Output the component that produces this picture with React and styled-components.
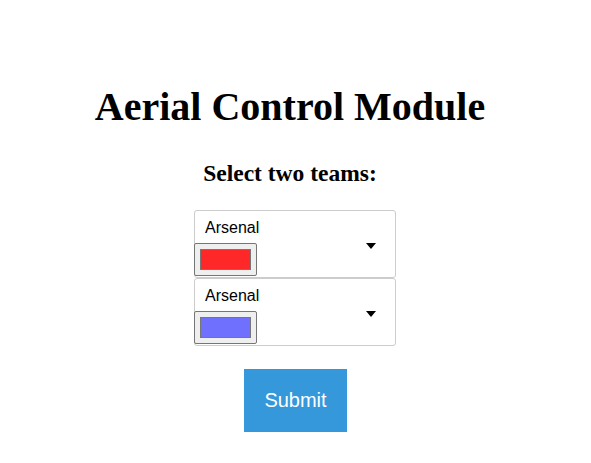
import React, { useState } from "react";
import styled, { createGlobalStyle } from "styled-components";

/* Styling */
const GlobalStyle = createGlobalStyle`
  body {
    margin: 0;
    background: #ffffff;
    font-family: "Liberation Serif", "Times New Roman", serif;
  }
`;

const Wrapper = styled.div`
  display: flex;
  flex-direction: column;
  align-items: center;
  padding-top: 84px;
`;

const Header = styled.div`
  display: flex;
  flex-direction: column;
  align-items: center;
  margin-right: 11px;
`;

const Title = styled.h1`
  margin: 0;
  font-size: 40px;
  line-height: 46px;
  font-weight: 700;
  color: #000;
`;

const SubTitle = styled.h2`
  margin: 30px 0 0;
  font-size: 23.5px;
  line-height: 26px;
  font-weight: 700;
  color: #000;
`;

const TeamList = styled.div`
  display: flex;
  flex-direction: column;
  margin: 24px 1px 0 0;
`;

const TeamBox = styled.div`
  box-sizing: border-box;
  width: 202px;
  height: 68px;
  border: 1px solid #cccccc;
  border-radius: 3px;
  display: flex;
  align-items: flex-start;
  justify-content: space-between;
  background: #fff;
`;

const TeamInfo = styled.div`
  display: flex;
  flex-direction: column;
  align-items: flex-start;
  margin-left: -1px;
`;

const TeamName = styled.span`
  font-family: "Liberation Sans", Arial, sans-serif;
  font-size: 16px;
  line-height: 18px;
  color: #000;
  padding: 8px 0 0 11px;
  height: 24px;
`;

const ColorPicker = styled.div`
  box-sizing: border-box;
  width: 63px;
  height: 33px;
  border: 1px solid #767676;
  border-radius: 2px;
  background: #efefef;
  display: flex;
  align-items: center;
  justify-content: center;
`;

const Swatch = styled.div`
  box-sizing: border-box;
  width: 51px;
  height: 21px;
  border: 1px solid #777;
  background: ${(p) => p.$color};
`;

const Arrow = styled.span`
  width: 0;
  height: 0;
  margin: 32px 19px 0 0;
  border-left: 5px solid transparent;
  border-right: 5px solid transparent;
  border-top: 6px solid #000;
`;

const SubmitButton = styled.button`
  margin-top: 23px;
  border: none;
  background: #3498db;
  color: #fff;
  font-family: "Liberation Sans", Arial, sans-serif;
  font-size: 20px;
  line-height: 23px;
  padding: 20px;
  cursor: pointer;
`;

/* ───────────────────────────────────────────── */

const TEAMS = [
  { name: "Arsenal", color: "#ff2828" },
  { name: "Arsenal", color: "#7070ff" },
];

const App = () => {
  const [teams] = useState(TEAMS);

  return (
    <>
      <GlobalStyle />
      <Wrapper>
        <Header>
          <Title>Aerial Control Module</Title>
          <SubTitle>Select two teams:</SubTitle>
        </Header>

        <TeamList>
          {teams.map((team, i) => (
            <TeamBox key={i}>
              <TeamInfo>
                <TeamName>{team.name}</TeamName>
                <ColorPicker>
                  <Swatch $color={team.color} />
                </ColorPicker>
              </TeamInfo>
              <Arrow />
            </TeamBox>
          ))}
        </TeamList>

        <SubmitButton>Submit</SubmitButton>
      </Wrapper>
    </>
  );
};

export default App;
